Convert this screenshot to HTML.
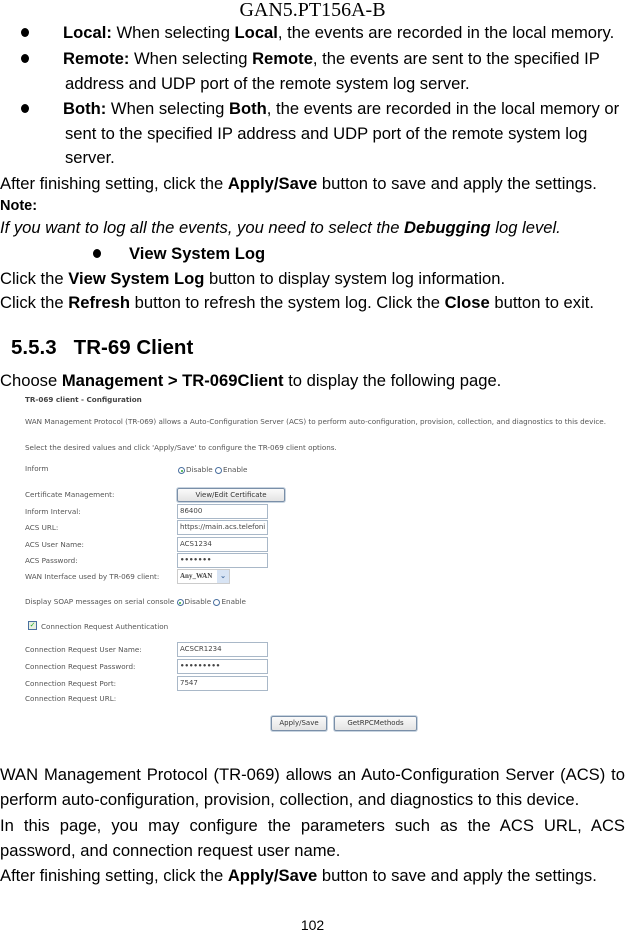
<!DOCTYPE html>
<html><head><meta charset="utf-8"><style>
body{margin:0;width:625px;height:931px;background:#fff;position:relative;overflow:hidden;font-family:"Liberation Sans",sans-serif;color:#000}
.t{position:absolute;font-size:16.6px;line-height:18px;white-space:nowrap}
.b{font-weight:bold}
.dot{position:absolute;width:8px;height:9px;border-radius:50%;background:#000}
.s{position:absolute;font-family:"DejaVu Sans",sans-serif;font-size:7.2px;color:#555;white-space:nowrap;line-height:9px}
.in{position:absolute;left:177px;border:1px solid #a9b8c8;background:#fff;font-family:"DejaVu Sans",sans-serif;font-size:7px;line-height:13px;color:#444;padding-left:2px;box-sizing:border-box;width:91px;height:15px}
.btn{position:absolute;border:1px solid #7a8fa8;border-radius:2px;background:linear-gradient(#fafafa,#e4e4e4);font-family:"DejaVu Sans",sans-serif;font-size:7px;color:#333;text-align:center;box-sizing:border-box;box-shadow:0 0 0 1px #c8d4e0}
.rad{display:inline-block;width:7px;height:7px;border:1px solid #4a70a0;border-radius:50%;vertical-align:-2px;margin-right:1px;box-sizing:border-box;position:relative}
.rad.on:after{content:"";position:absolute;left:1.5px;top:1.5px;width:2px;height:2px;border-radius:50%;background:#3a3}
</style></head><body>
<div class="t" style="left:0;width:625px;text-align:center;top:-1px;font-family:'Liberation Serif',serif;font-size:20px;line-height:22px">GAN5.PT156A-B</div>

<div class="dot" style="left:21px;top:28px"></div>
<div class="t" style="left:63px;top:24px"><span class="b">Local:</span> When selecting <span class="b">Local</span>, the events are recorded in the local memory.</div>
<div class="dot" style="left:21px;top:54px"></div>
<div class="t" style="left:63px;top:50px"><span class="b">Remote:</span> When selecting <span class="b">Remote</span>, the events are sent to the specified IP</div>
<div class="t" style="left:65px;top:75px">address and UDP port of the remote system log server.</div>
<div class="dot" style="left:21px;top:104px"></div>
<div class="t" style="left:63px;top:100px"><span class="b">Both:</span> When selecting <span class="b">Both</span>, the events are recorded in the local memory or</div>
<div class="t" style="left:65px;top:125px">sent to the specified IP address and UDP port of the remote system log</div>
<div class="t" style="left:65px;top:149px">server.</div>
<div class="t" style="left:0;top:175px">After finishing setting, click the <span class="b">Apply/Save</span> button to save and apply the settings.</div>
<div class="t b" style="left:0;top:197px;font-size:14.5px">Note:</div>
<div class="t" style="left:0;top:219px;font-style:italic">If you want to log all the events, you need to select the <span class="b">Debugging</span> log level.</div>
<div class="dot" style="left:93px;top:249px"></div>
<div class="t b" style="left:129px;top:245px">View System Log</div>
<div class="t" style="left:0;top:270px">Click the <span class="b">View System Log</span> button to display system log information.</div>
<div class="t" style="left:0;top:294px">Click the <span class="b">Refresh</span> button to refresh the system log. Click the <span class="b">Close</span> button to exit.</div>
<div class="t b" style="left:11px;top:337px;font-size:20.5px;line-height:22px">5.5.3&nbsp;&nbsp; TR-69 Client</div>
<div class="t" style="left:0;top:372px">Choose <span class="b">Management &gt; TR-069Client</span> to display the following page.</div>

<div class="s" style="left:25px;top:395px;font-weight:bold;color:#444">TR-069 client - Configuration</div>
<div class="s" style="left:25px;top:417px">WAN Management Protocol (TR-069) allows a Auto-Configuration Server (ACS) to perform auto-configuration, provision, collection, and diagnostics to this device.</div>
<div class="s" style="left:25px;top:443px">Select the desired values and click 'Apply/Save' to configure the TR-069 client options.</div>
<div class="s" style="left:25px;top:464px">Inform</div>
<div class="s" style="left:178px;top:465px"><span class="rad on"></span>Disable <span class="rad"></span>Enable</div>
<div class="s" style="left:25px;top:490px">Certificate Management:</div>
<div class="btn" style="left:177px;top:488px;width:108px;height:14px;line-height:12px">View/Edit Certificate</div>
<div class="s" style="left:25px;top:507px">Inform Interval:</div><div class="in" style="top:504px">86400</div>
<div class="s" style="left:25px;top:523px">ACS URL:</div><div class="in" style="top:520px;overflow:hidden">https://main.acs.telefoni</div>
<div class="s" style="left:25px;top:540px">ACS User Name:</div><div class="in" style="top:537px">ACS1234</div>
<div class="s" style="left:25px;top:556px">ACS Password:</div><div class="in" style="top:553px;font-weight:bold">•••••••</div>
<div class="s" style="left:25px;top:572px">WAN Interface used by TR-069 client:</div>
<div class="in" style="top:569px;width:53px;font-family:'Liberation Serif',serif;font-weight:bold;border-color:#ccc">Any_WAN<span style="position:absolute;right:0;top:0;width:12px;height:13px;background:#d8e4f4;color:#4a6fa0;text-align:center">⌄</span></div>
<div class="s" style="left:25px;top:597px">Display SOAP messages on serial console <span class="rad on"></span>Disable <span class="rad"></span>Enable</div>
<div style="position:absolute;left:28px;top:621px;width:7px;height:7px;border:1px solid #4a70a0;background:#e8f0e0;font-size:7px;line-height:7px;color:#2a2;text-align:center">✓</div>
<div class="s" style="left:41px;top:622px">Connection Request Authentication</div>
<div class="s" style="left:25px;top:645px">Connection Request User Name:</div><div class="in" style="top:642px">ACSCR1234</div>
<div class="s" style="left:25px;top:662px">Connection Request Password:</div><div class="in" style="top:659px;font-weight:bold">•••••••••</div>
<div class="s" style="left:25px;top:679px">Connection Request Port:</div><div class="in" style="top:676px">7547</div>
<div class="s" style="left:25px;top:694px">Connection Request URL:</div>
<div class="btn" style="left:271px;top:716px;width:56px;height:15px;line-height:13px">Apply/Save</div>
<div class="btn" style="left:334px;top:716px;width:83px;height:15px;line-height:13px">GetRPCMethods</div>

<div class="t" style="left:0;top:766px;width:625px;text-align:justify;text-align-last:justify">WAN Management Protocol (TR-069) allows an Auto-Configuration Server (ACS) to</div>
<div class="t" style="left:0;top:791px">perform auto-configuration, provision, collection, and diagnostics to this device.</div>
<div class="t" style="left:0;top:817px;width:625px;text-align:justify;text-align-last:justify">In this page, you may configure the parameters such as the ACS URL, ACS</div>
<div class="t" style="left:0;top:842px">password, and connection request user name.</div>
<div class="t" style="left:0;top:867px">After finishing setting, click the <span class="b">Apply/Save</span> button to save and apply the settings.</div>
<div class="t" style="left:0;width:625px;text-align:center;top:916px;font-size:14px">102</div>
</body></html>
